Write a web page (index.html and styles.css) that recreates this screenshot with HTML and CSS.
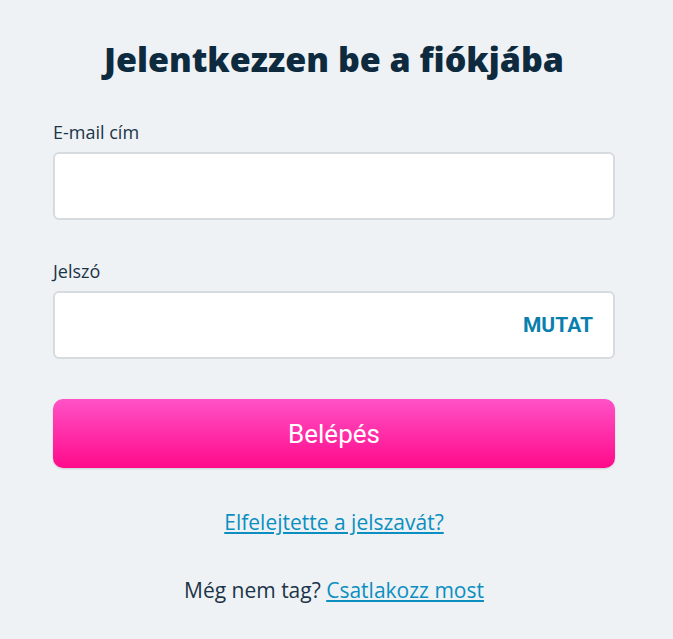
FILE: index.html
```html
<!DOCTYPE html>
<html lang="hu">
<head>
  <meta charset="UTF-8">
  <title>Belépés</title>
  <link rel="stylesheet" href="styles.css">
</head>
<body>
  <div class="login">
    <h1>Jelentkezzen be a fiókjába</h1>

    <form class="login-form" onsubmit="return false;">
      <div class="field">
        <label for="email">E-mail cím</label>
        <input type="text" id="email">
      </div>

      <div class="field">
        <label for="password">Jelszó</label>
        <div class="password-box">
          <input type="password" id="password">
          <button type="button" class="show-btn" onclick="togglePassword()">MUTAT</button>
        </div>
      </div>

      <button type="submit" class="submit-btn">Belépés</button>
    </form>

    <p class="forgot"><a href="#">Elfelejtette a jelszavát?</a></p>
    <p class="join">Még nem tag? <a href="#">Csatlakozz most</a></p>
  </div>

  <script>
    function togglePassword() {
      const input = document.getElementById('password');
      input.type = input.type === 'password' ? 'text' : 'password';
    }
  </script>
</body>
</html>
```

FILE: styles.css
```css
/* Login page */
body {
  margin: 0;
  background-color: #eef2f5;
  font-family: "Open Sans", "Noto Sans", sans-serif;
  color: #1b3447;
}

.login {
  width: 562px;
  margin: 0 0 0 53px;
  padding-top: 36px;
}

h1 {
  margin: 0 0 39px;
  text-align: center;
  font-family: "Open Sans", sans-serif;
  font-weight: 800;
  font-size: 34px;
  line-height: 46px;
  color: #0d2a3e;
}

.login-form {
  display: flex;
  flex-direction: column;
}

.field {
  display: flex;
  flex-direction: column;
  margin-bottom: 40px;
}

.field label {
  font-size: 18px;
  line-height: 22px;
  margin-bottom: 9px;
  color: #1b3447;
}

.field input {
  height: 68px;
  box-sizing: border-box;
  border: 2px solid #d6dbdf;
  border-radius: 6px;
  background-color: #fff;
  padding: 0 16px;
  font-size: 18px;
  font-family: inherit;
  outline: none;
}

.password-box {
  position: relative;
  display: flex;
}

.password-box input {
  flex: 1;
  padding-right: 100px;
}

.show-btn {
  position: absolute;
  right: 22px;
  top: 0;
  height: 68px;
  border: none;
  background: none;
  padding: 0;
  font-family: Roboto, sans-serif;
  font-weight: 700;
  font-size: 21px;
  color: #0a7fae;
  cursor: pointer;
}

.submit-btn {
  margin-top: 0;
  height: 69px;
  border: none;
  border-radius: 10px;
  background: linear-gradient(#ff52c6, #ff0a8a);
  box-shadow: 0 1px 2px rgba(0, 0, 0, 0.15);
  color: #fff;
  font-family: Roboto, sans-serif;
  font-size: 26px;
  cursor: pointer;
}

.forgot,
.join {
  text-align: center;
  font-size: 21px;
  line-height: 28px;
  margin: 0;
}

.forgot {
  margin-top: 40px;
}

.join {
  margin-top: 40px;
}

a {
  color: #0a8fc0;
}
```
